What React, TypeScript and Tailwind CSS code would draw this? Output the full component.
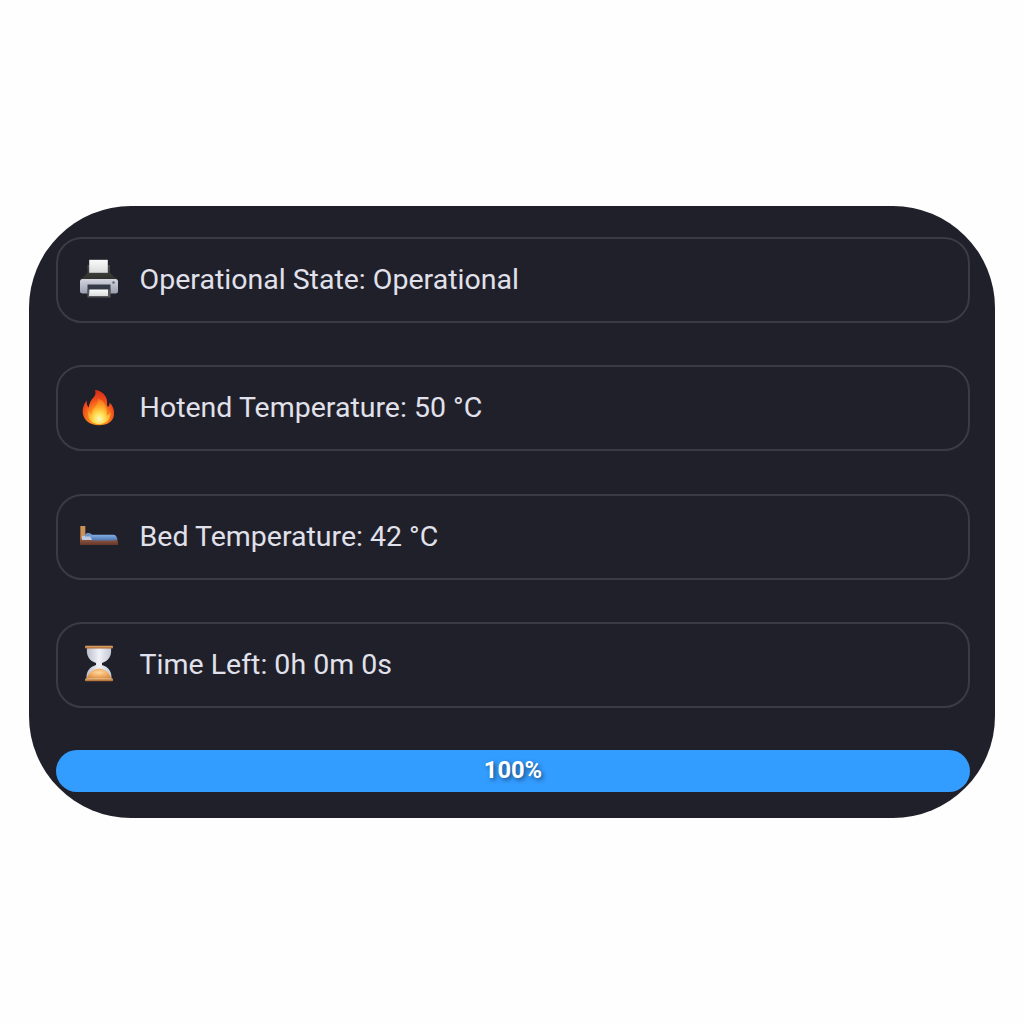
import type { ReactNode } from "react";

function PrinterIcon() {
  return (
    <svg viewBox="0 0 40 40" className="size-10">
      <defs>
        <linearGradient id="paper" x2="0" y2="1">
          <stop stopColor="#fafafa" />
          <stop offset="1" stopColor="#d9dcdc" />
        </linearGradient>
        <linearGradient id="lid" x2="0" y2="1">
          <stop stopColor="#484a48" />
          <stop offset="1" stopColor="#2d2f2a" />
        </linearGradient>
        <linearGradient id="body" x2="0" y2="1">
          <stop stopColor="#d2d4df" />
          <stop offset="1" stopColor="#9b9eae" />
        </linearGradient>
      </defs>
      <path d="M8.500 6h22.500v8l8 7H1l7.500-7z" fill="url(#lid)" />
      <path d="M10.200.800h18.600v13H10.200z" fill="url(#paper)" />
      <rect x="1" y="20" width="38" height="14.500" rx="2.500" fill="url(#body)" />
      <path d="M8.500 25.500h23v10h-23z" fill="#343947" />
      <path d="M8.500 30.500h23v8h-23z" fill="#555858" />
      <path d="M10.500 30.500h18.500v6.500H10z" fill="url(#paper)" />
      <circle cx="34.500" cy="23.500" r="1.200" fill="#626575" />
    </svg>
  );
}

function FlameIcon() {
  return (
    <svg viewBox="0 0 40 40" className="size-10">
      <defs>
        <radialGradient id="outerFlame" cx=".5" cy=".76" r=".72">
          <stop stopColor="#ffc13b" />
          <stop offset=".4" stopColor="#ff861b" />
          <stop offset=".7" stopColor="#ee4a1c" />
          <stop offset="1" stopColor="#d83018" />
        </radialGradient>
        <radialGradient id="innerFlame" cx=".5" cy=".8" r=".75">
          <stop stopColor="#fffbd5" />
          <stop offset=".3" stopColor="#ffe95b" />
          <stop offset=".65" stopColor="#ffab2b" />
          <stop offset="1" stopColor="#f97a1c" />
        </radialGradient>
      </defs>
      <path d="M16 3c6 .5 11 4.500 12 10.500.3 2.500-.2 4.500.7 6.500 1.500-1 2-2.500 1.800-4.500 3.500 3 5 7.500 4.500 12.500C34.300 34.500 28.500 38.300 20.300 38.300 10.500 38.300 4.500 33 3.700 26c-.4-4.500 1-9 4-12.500-.2 3 .4 5.500 2 7C10.300 16 12 13 14.700 10.300 16.500 8.300 17 5.500 16 3z" fill="url(#outerFlame)" />
      <path d="M19 12c-.3 4-1.500 6.500-4 9.500-1.800 2.200-2.300 4-2.300 6-1.500-1-2.500-2.500-3-4.500-2 7 1.500 14 10.600 14 7.500 0 11.700-5 11.200-12-1.200 2-2.200 3-4 3.500 1-6-1-11-4-14.500-1.500-1.500-3.500-1.500-4.500-2z" fill="url(#innerFlame)" opacity=".9" />
    </svg>
  );
}

function BedIcon() {
  return (
    <svg viewBox="0 0 40 40" className="size-10">
      <defs>
        <linearGradient id="frame" x2="0" y2="1">
          <stop stopColor="#945e43" />
          <stop offset="1" stopColor="#64372b" />
        </linearGradient>
        <linearGradient id="blanket" x2="0" y2="1">
          <stop stopColor="#83b0e5" />
          <stop offset="1" stopColor="#4c72b0" />
        </linearGradient>
      </defs>
      <path d="M1 10h5.500V29H1z" fill="#98663f" />
      <path d="M2 10h4v14H2z" fill="#c89258" />
      <path d="M2 22.500h36l1 4V29H1v-4z" fill="url(#frame)" />
      <path d="M3 20h12v4H3z" fill="#bfc8dc" />
      <path d="M6 18.500c1-2 5-2 7 0l1 2H6z" fill="#6d96cb" />
      <path d="M11 20c2-1.500 4-1.300 6-1.300h17c3 0 4 2 4.500 5-8 1.500-17 .5-25 1z" fill="url(#blanket)" />
    </svg>
  );
}

function HourglassIcon() {
  return (
    <svg viewBox="0 0 40 40" className="size-10">
      <defs>
        <linearGradient id="glass">
          <stop stopColor="#b8bdcc" />
          <stop offset=".5" stopColor="#f0f2f8" />
          <stop offset="1" stopColor="#c2c7d4" />
        </linearGradient>
        <radialGradient id="lowerGlass" cx=".5" cy=".4" r=".65">
          <stop stopColor="#ffd9a4" />
          <stop offset=".6" stopColor="#efaa5f" />
          <stop offset="1" stopColor="#d88c44" />
        </radialGradient>
        <linearGradient id="cap" x2="0" y2="1">
          <stop stopColor="#e5ad6c" />
          <stop offset="1" stopColor="#a8632d" />
        </linearGradient>
      </defs>
      <path d="M8 4h24c1 8-2.500 13-9 15v2c7 2 10 7 9.500 14h-25C7 28 10 23 17 21v-2C10.500 17 7 12 8 4z" fill="url(#glass)" />
      <path d="M8 34.500c.5-5 5-9 12-10 7 1 11.500 5 12 10z" fill="url(#lowerGlass)" />
      <rect x="6" y="1.700" width="28" height="2.800" rx=".8" fill="url(#cap)" />
      <rect x="6" y="34.500" width="28" height="2.800" rx=".8" fill="url(#cap)" />
    </svg>
  );
}

function StatusRow({ icon, children }: { icon: ReactNode; children: ReactNode }) {
  return (
    <div className="flex h-[86px] shrink-0 items-center gap-[20.6px] rounded-[26px] border-2 border-[#3b3b45] pl-[21px] text-[28.5px] leading-[42px] text-[#e1e1eb]">
      <span className="shrink-0 pb-[2px]">{icon}</span>
      <span className="whitespace-nowrap">{children}</span>
    </div>
  );
}

export default function App() {
  return (
    <main className="flex h-screen items-center bg-[#fefefe] pl-[29px] font-['Roboto',sans-serif]">
      <section className="flex h-[612px] w-[966px] flex-col justify-between rounded-[102px] bg-[#20202a] pt-[31px] pr-[25px] pb-[26px] pl-[27px]">
        <StatusRow icon={<PrinterIcon />}>Operational State: Operational</StatusRow>
        <StatusRow icon={<FlameIcon />}>Hotend Temperature: 50 °C</StatusRow>
        <StatusRow icon={<BedIcon />}>Bed Temperature: 42 °C</StatusRow>
        <StatusRow icon={<HourglassIcon />}>Time Left: 0h 0m 0s</StatusRow>
        <div className="flex h-[42px] shrink-0 items-center justify-center rounded-full bg-[#339cff] pb-[2px] text-[23.7px] leading-8 font-bold text-white [text-shadow:2px_2px_4px_rgba(0,0,0,0.5)]">
          100%
        </div>
      </section>
    </main>
  );
}
